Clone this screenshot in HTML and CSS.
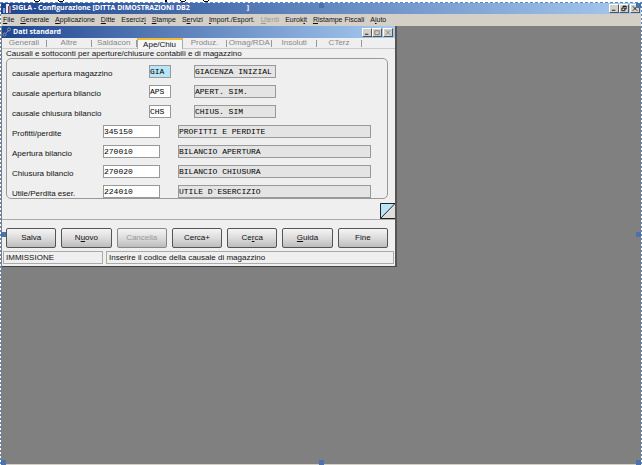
FILE: index.html
```html
<!DOCTYPE html>
<html lang="it">

<head>
    <meta charset="UTF-8">
    <meta name="viewport" content="width=device-width, initial-scale=1.0">
    <title>SIGLA - Configurazione</title>
    <link rel="stylesheet" href="styles.css">
</head>

<body>
    <svg class="cut-line" viewBox="0 0 240 2" aria-hidden="true">
        <path d="M34 0h1v1h4v-1h1v1h-1v1h-4v-1h-1zM58 0h1v1h4v-1h1v1h-1v1h-4v-1h-1zM165 0h2v2h-2zM180 0h1v1h4v-1h1v1h-1v1h-4v-1h-1zM203 0h1v1h4v-1h1v1h-1v1h-4v-1h-1z" />
    </svg>

    <div class="app">
        <header class="title-bar">
            <svg class="app-icon" viewBox="0 0 9 10" aria-hidden="true">
                <path fill="#8da4dc" d="M0 5h3v5h-3z" />
                <path fill="#e8edf8" d="M3 1h3v9h-3z" />
                <path fill="#c07880" d="M6 3h2v7h-2z" />
                <path fill="#3c4a80" d="M2 5h1v5h-1zM5 3h1v7h-1z" />
            </svg>
            <h1>SIGLA - Configurazione [DITTA DIMOSTRAZIONI DB2</h1>
            <span class="title-end">]</span>
            <div class="window-buttons">
                <button aria-label="Riduci a icona"><svg viewBox="0 0 9 8"><path d="M2 6h4" /></svg></button>
                <button aria-label="Ripristina"><svg viewBox="0 0 9 8"><path d="M3.5 3v-1.500h3.500v3h-1.500M2 3.500h3.500v3h-3.500zM3 1.500h4" /></svg></button>
                <button class="close" aria-label="Chiudi"><svg viewBox="0 0 9 8"><path d="M2 1.500l5 5M7 1.500l-5 5" /></svg></button>
            </div>
        </header>

        <nav class="menu-bar">
            <button><u>F</u>ile</button>
            <button><u>G</u>enerale</button>
            <button><u>A</u>pplicazione</button>
            <button><u>D</u>itte</button>
            <button>Eserciz<u>i</u></button>
            <button><u>S</u>tampe</button>
            <button>S<u>e</u>rvizi</button>
            <button><u>I</u>mport./Esport.</button>
            <button disabled><u>U</u>tenti</button>
            <button>Eurok<u>i</u>t</button>
            <button><u>R</u>istampe Fiscali</button>
            <button>A<u>i</u>uto</button>
        </nav>

        <main class="desktop">
            <section class="window">
                <header class="title-bar child-bar">
                    <svg class="link-icon" viewBox="0 0 10 10" aria-hidden="true">
                        <path d="M3.500 6.500l3-3" />
                        <circle cx="2.500" cy="7.500" r="1.500" />
                        <circle cx="7" cy="2.500" r="1.500" />
                    </svg>
                    <h2>Dati standard</h2>
                    <div class="window-buttons">
                        <button aria-label="Riduci a icona"><svg viewBox="0 0 9 8"><path d="M2 6h4" /></svg></button>
                        <button class="dim" aria-label="Ingrandisci"><svg viewBox="0 0 9 8"><path d="M2 2h5v4.500h-5z" /></svg></button>
                        <button class="close dim" aria-label="Chiudi"><svg viewBox="0 0 9 8"><path d="M2 1.500l5 5M7 1.500l-5 5" /></svg></button>
                    </div>
                </header>

                <div class="tabs" role="tablist">
                    <button role="tab">Generali</button>
                    <button role="tab">Altre</button>
                    <button role="tab">Saldacon</button>
                    <button role="tab" class="active" aria-selected="true">Ape/Chiu</button>
                    <button role="tab">Produz.</button>
                    <button role="tab">Omag/RDA</button>
                    <button role="tab">Insoluti</button>
                    <button role="tab">CTerz</button>
                </div>

                <div class="panel">
                    <p class="caption">Causali e sottoconti per aperture/chiusure contabili e di magazzino</p>
                    <div class="group">
                        <div class="row code-row">
                            <label for="cau-mag">causale apertura magazzino</label>
                            <input type="text" id="cau-mag" class="focused" value="GIA">
                            <input type="text" class="descr" value="GIACENZA INIZIAL" aria-label="Descrizione causale magazzino" readonly>
                        </div>
                        <div class="row code-row">
                            <label for="cau-ape">causale apertura bilancio</label>
                            <input type="text" id="cau-ape" value="APS">
                            <input type="text" class="descr" value="APERT. SIM." aria-label="Descrizione causale apertura" readonly>
                        </div>
                        <div class="row code-row">
                            <label for="cau-chi">causale chiusura bilancio</label>
                            <input type="text" id="cau-chi" value="CHS">
                            <input type="text" class="descr" value="CHIUS. SIM" aria-label="Descrizione causale chiusura" readonly>
                        </div>
                        <div class="row">
                            <label for="profitti">Profitti/perdite</label>
                            <input type="text" id="profitti" value="345150">
                            <input type="text" class="descr" value="PROFITTI E PERDITE" aria-label="Descrizione profitti" readonly>
                        </div>
                        <div class="row">
                            <label for="apertura">Apertura bilancio</label>
                            <input type="text" id="apertura" value="270010">
                            <input type="text" class="descr" value="BILANCIO APERTURA" aria-label="Descrizione apertura" readonly>
                        </div>
                        <div class="row">
                            <label for="chiusura">Chiusura bilancio</label>
                            <input type="text" id="chiusura" value="270020">
                            <input type="text" class="descr" value="BILANCIO CHIUSURA" aria-label="Descrizione chiusura" readonly>
                        </div>
                        <div class="row">
                            <label for="utile">Utile/Perdita eser.</label>
                            <input type="text" id="utile" value="224010">
                            <input type="text" class="descr" value="UTILE D`ESERCIZIO" aria-label="Descrizione utile" readonly>
                        </div>
                    </div>
                    <svg class="corner" viewBox="0 0 15 16" aria-hidden="true">
                        <path fill="#b9e3f7" d="M0 0h15l-15 16z" />
                        <path fill="#dedede" d="M15 0v16h-15z" />
                        <path fill="none" stroke="#222" d="M15 .5h-14.500v15h14.500M.5 15.500l14.500-15" />
                    </svg>
                </div>

                <div class="actions">
                    <button>Salva</button>
                    <button>N<u>u</u>ovo</button>
                    <button disabled>Cancella</button>
                    <button>Cerca+</button>
                    <button>Ce<u>r</u>ca</button>
                    <button><u>G</u>uida</button>
                    <button>Fine</button>
                </div>

                <footer class="status">
                    <span class="mode">IMMISSIONE</span>
                    <span class="hint">Inserire il codice della causale di magazzino</span>
                </footer>
            </section>
        </main>

        <div class="marquee">
            <i class="handle top"></i>
            <i class="handle top right"></i>
            <i class="handle middle left"></i>
            <i class="handle middle right"></i>
            <i class="handle bottom left"></i>
            <i class="handle bottom"></i>
            <i class="handle bottom right"></i>
        </div>
    </div>
</body>

</html>
```

FILE: styles.css
```css
* {
    box-sizing: border-box;
}

body {
    margin: 0;
    height: 100vh;
    display: flex;
    flex-direction: column;
    background: white;
    font-family: "Liberation Sans", Arial, sans-serif;
    font-size: 8px;
    line-height: 10px;
    color: #111;
    overflow: hidden;
}

button,
input {
    font: inherit;
    color: inherit;
    margin: 0;
    padding: 0;
}

h1,
h2,
p {
    margin: 0;
}

u {
    text-underline-offset: 1px;
    text-decoration-thickness: 1px;
}

.cut-line {
    width: 240px;
    height: 2px;
    flex: none;
}

.app {
    position: relative;
    flex: 1;
    display: flex;
    flex-direction: column;
    background: #d4d0c8;
}

.title-bar {
    display: flex;
    align-items: center;
    height: 12px;
    padding: 0 2px 0 3px;
    color: white;
    background: linear-gradient(to right, #1f4590, #a6caf0);
}

.title-bar h1,
.title-bar h2,
.title-end {
    font-family: "Open Sans", sans-serif;
    font-size: 7px;
    font-weight: bold;
    line-height: 10px;
    white-space: nowrap;
}

.app-icon {
    width: 9px;
    height: 10px;
}

.title-end {
    margin-left: 57px;
}

.window-buttons {
    display: flex;
    margin-left: auto;
}

.window-buttons button {
    width: 10px;
    height: 9px;
    background: #d4d0c8;
    border: 1px solid;
    border-color: #fff #555 #555 #fff;
    display: flex;
}

.window-buttons .close {
    margin-left: 1px;
}

.window-buttons svg {
    width: 100%;
    height: 100%;
    fill: none;
    stroke: #111;
}

.window-buttons .dim svg {
    stroke: #777;
}

.menu-bar {
    display: flex;
    gap: 6px;
    height: 12px;
    padding: 0 3px;
    background: #d4d0c8;
}

.menu-bar button {
    border: none;
    background: none;
    font-size: 7px;
    white-space: nowrap;
}

.menu-bar button:disabled {
    color: #999;
}

.desktop {
    flex: 1;
    margin-bottom: 1px;
    background: #808080;
}

.window {
    width: 395px;
    margin-left: 2px;
    background: #efefef;
    border-right: 2px solid #555;
    border-bottom: 1px solid #444;
}

.child-bar {
    padding: 0 2px 0 0;
}

.link-icon {
    width: 10px;
    height: 10px;
    margin-right: 1px;
    fill: none;
    stroke: #8a94a4;
}

.tabs {
    display: flex;
    height: 11px;
    padding-right: 33px;
    border-bottom: 1px solid #ccc;
}

.tabs button {
    flex: 1 0 0;
    border: none;
    border-right: 1px solid #999;
    border-image: linear-gradient(transparent 30%, #999 30%, #999 80%, transparent 80%) 1;
    background: none;
    color: #888;
}

.tabs .active {
    height: 11px;
    border: 1px solid #aaa;
    border-image: none;
    border-top: 2px solid #f2bd35;
    border-bottom: none;
    background: #f6f6f6;
    color: #111;
    line-height: 8px;
}

.panel {
    position: relative;
    height: 171px;
    padding: 0 7px 0 4px;
    border-bottom: 1px solid #aaa;
}

.caption {
    line-height: 9px;
}

.group {
    padding: 6px 16px 0 5px;
    border: 1px solid #999;
    border-radius: 5px;
}

.row {
    display: grid;
    grid-template-columns: 91px 57px 1fr;
    height: 20px;
    align-items: start;
}

.row:last-child {
    height: 13px;
}

.row label {
    padding-top: 4px;
    white-space: nowrap;
}

.row input {
    min-width: 0;
    width: 100%;
    height: 13px;
    padding-bottom: 1px;
    background: white;
    border: 1px solid #999;
    border-radius: 0;
    font-family: "Liberation Mono", "Courier New", monospace;
    color: black;
}

.row .descr {
    width: auto;
    margin-left: 18px;
    background: #e4e4e4;
}

.row .focused {
    background: #b9e3f7;
}

.code-row {
    grid-template-columns: 137px 22px 105px;
}

.code-row .descr {
    margin-left: 23px;
}

.corner {
    position: absolute;
    right: 0;
    bottom: 0;
    width: 15px;
    height: 16px;
}

.actions {
    display: flex;
    gap: 5px;
    padding: 8px 7px 3px 4px;
}

.actions button {
    flex: 1 0 0;
    height: 20px;
    border: 1px solid #555;
    border-radius: 2px;
    background: linear-gradient(#f4f4f4, #dcdcdc 50%, #bcbcbc);
}

.actions button:disabled {
    color: #999;
    border-color: #888;
}

.status {
    display: flex;
    gap: 3px;
    padding: 0 1px 2px;
}

.status span {
    height: 13px;
    padding-left: 2px;
    border: 1px solid #aaa;
    line-height: 11px;
    white-space: nowrap;
}

.mode {
    flex: 0 0 100px;
}

.hint {
    flex: 1;
}

/* selection frame over the whole application */
.marquee {
    position: absolute;
    inset: 0;
    pointer-events: none;
    background:
        repeating-linear-gradient(to right, #5d87bd 0 3px, white 3px 5px) top / 100% 1px no-repeat,
        repeating-linear-gradient(#5d87bd 0 2px, white 2px 4px) left / 1px 100% no-repeat,
        repeating-linear-gradient(#5d87bd 0 2px, white 2px 4px) right / 1px 100% no-repeat;
}

.handle {
    position: absolute;
    left: 50%;
    width: 5px;
    height: 5px;
    margin-left: -2px;
    background: #4a73ab;
}

.handle.top {
    top: 1px;
}

.handle.middle {
    top: 50%;
    margin-top: -2px;
}

.handle.bottom {
    bottom: 0;
}

.handle.left {
    left: 1px;
    margin-left: 0;
}

.handle.right {
    left: auto;
    right: 1px;
}
```
